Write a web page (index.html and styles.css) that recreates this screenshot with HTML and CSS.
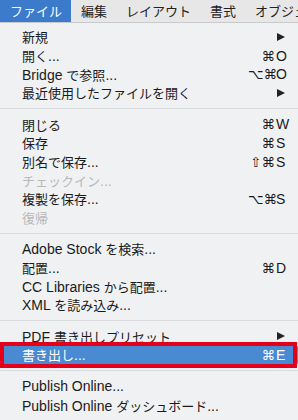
FILE: index.html
```html
<!DOCTYPE html>
<html lang="ja">
<head>
<meta charset="utf-8">
<link rel="stylesheet" href="styles.css">
</head>
<body>
<div class="menubar">
  <span class="mb active">ファイル</span>
  <span class="mb">編集</span>
  <span class="mb">レイアウト</span>
  <span class="mb">書式</span>
  <span class="mb">オブジェクト</span>
</div>
<div class="menu">
  <div class="item"><span class="label"><span class="ja">新規</span></span><span class="arrow"></span></div>
  <div class="item"><span class="label"><span class="ja">開く</span>...</span><span class="sc"><span class="mods">⌘</span><span class="key">O</span></span></div>
  <div class="item"><span class="label">Bridge <span class="ja">で参照</span>...</span><span class="sc"><span class="mods">⌥⌘</span><span class="key">O</span></span></div>
  <div class="item"><span class="label"><span class="ja">最近使用したファイルを開く</span></span><span class="arrow"></span></div>
  <div class="sep"></div>
  <div class="item"><span class="label"><span class="ja">閉じる</span></span><span class="sc"><span class="mods">⌘</span><span class="key">W</span></span></div>
  <div class="item"><span class="label"><span class="ja">保存</span></span><span class="sc"><span class="mods">⌘</span><span class="key">S</span></span></div>
  <div class="item"><span class="label"><span class="ja">別名で保存</span>...</span><span class="sc"><span class="mods">⇧⌘</span><span class="key">S</span></span></div>
  <div class="item disabled"><span class="label"><span class="ja">チェックイン</span>...</span></div>
  <div class="item"><span class="label"><span class="ja">複製を保存</span>...</span><span class="sc"><span class="mods">⌥⌘</span><span class="key">S</span></span></div>
  <div class="item disabled"><span class="label"><span class="ja">復帰</span></span></div>
  <div class="sep"></div>
  <div class="item"><span class="label">Adobe Stock <span class="ja">を検索</span>...</span></div>
  <div class="item"><span class="label"><span class="ja">配置</span>...</span><span class="sc"><span class="mods">⌘</span><span class="key">D</span></span></div>
  <div class="item"><span class="label">CC Libraries <span class="ja">から配置</span>...</span></div>
  <div class="item"><span class="label">XML <span class="ja">を読み込み</span>...</span></div>
  <div class="sep"></div>
  <div class="item"><span class="label">PDF <span class="ja">書き出しプリセット</span></span><span class="arrow"></span></div>
  <div class="item selected"><span class="label"><span class="ja">書き出し</span>...</span><span class="sc"><span class="mods">⌘</span><span class="key">E</span></span></div>
  <div class="sep"></div>
  <div class="item"><span class="label">Publish Online...</span></div>
  <div class="item"><span class="label">Publish Online <span class="ja">ダッシュボード</span>...</span></div>
</div>
</body>
</html>
```

FILE: styles.css
```css
html, body {
  margin: 0;
  padding: 0;
}
body {
  width: 298px;
  height: 420px;
  overflow: hidden;
  background: #f0f1f3;
  font-family: "Liberation Sans", "Noto Sans CJK JP", sans-serif;
  font-size: 14px;
  color: #1a1a1a;
}
.ja {
  font-family: "Noto Sans CJK JP", sans-serif;
  font-size: 13px;
}
.menubar {
  height: 22px;
  display: flex;
  align-items: center;
  background: #e7e7e8;
  border-bottom: 1px solid #c9c9cb;
  white-space: nowrap;
  overflow: hidden;
  font-family: "Noto Sans CJK JP", sans-serif;
  font-size: 13px;
}
.mb {
  height: 22px;
  line-height: 22px;
  padding: 0 9px 0 10px;
  color: #222;
  flex: none;
}
.mb.active {
  background: #3c7bcb;
  color: #fff;
}
.menu {
  padding-top: 4.7px;
}
.item {
  height: 18.6px;
  display: flex;
  align-items: center;
  padding-left: 22px;
  position: relative;
  white-space: nowrap;
}
.label {
  flex: 1;
}
.item.disabled {
  color: #b7b8ba;
}
.sc {
  display: flex;
  align-items: center;
  margin-right: 9px;
}
.mods {
  width: 27px;
  text-align: right;
  font-family: "DejaVu Sans", sans-serif;
  font-size: 13.5px;
}
.key {
  width: 13px;
  padding-left: 1px;
  text-align: left;
}
.arrow {
  width: 0;
  height: 0;
  border-left: 8px solid #222;
  border-top: 4.5px solid transparent;
  border-bottom: 4.5px solid transparent;
  margin-right: 13px;
}
.sep {
  height: 13px;
  display: flex;
  align-items: center;
}
.sep::before {
  content: "";
  flex: 1;
  height: 1px;
  background: #dadbdd;
}
.item.selected {
  background: #4a8ad2;
  color: #fff;
}
.item.selected::after {
  content: "";
  position: absolute;
  left: 0;
  right: 1px;
  top: -4px;
  bottom: -4px;
  border: 4px solid #e2001a;
}
```
